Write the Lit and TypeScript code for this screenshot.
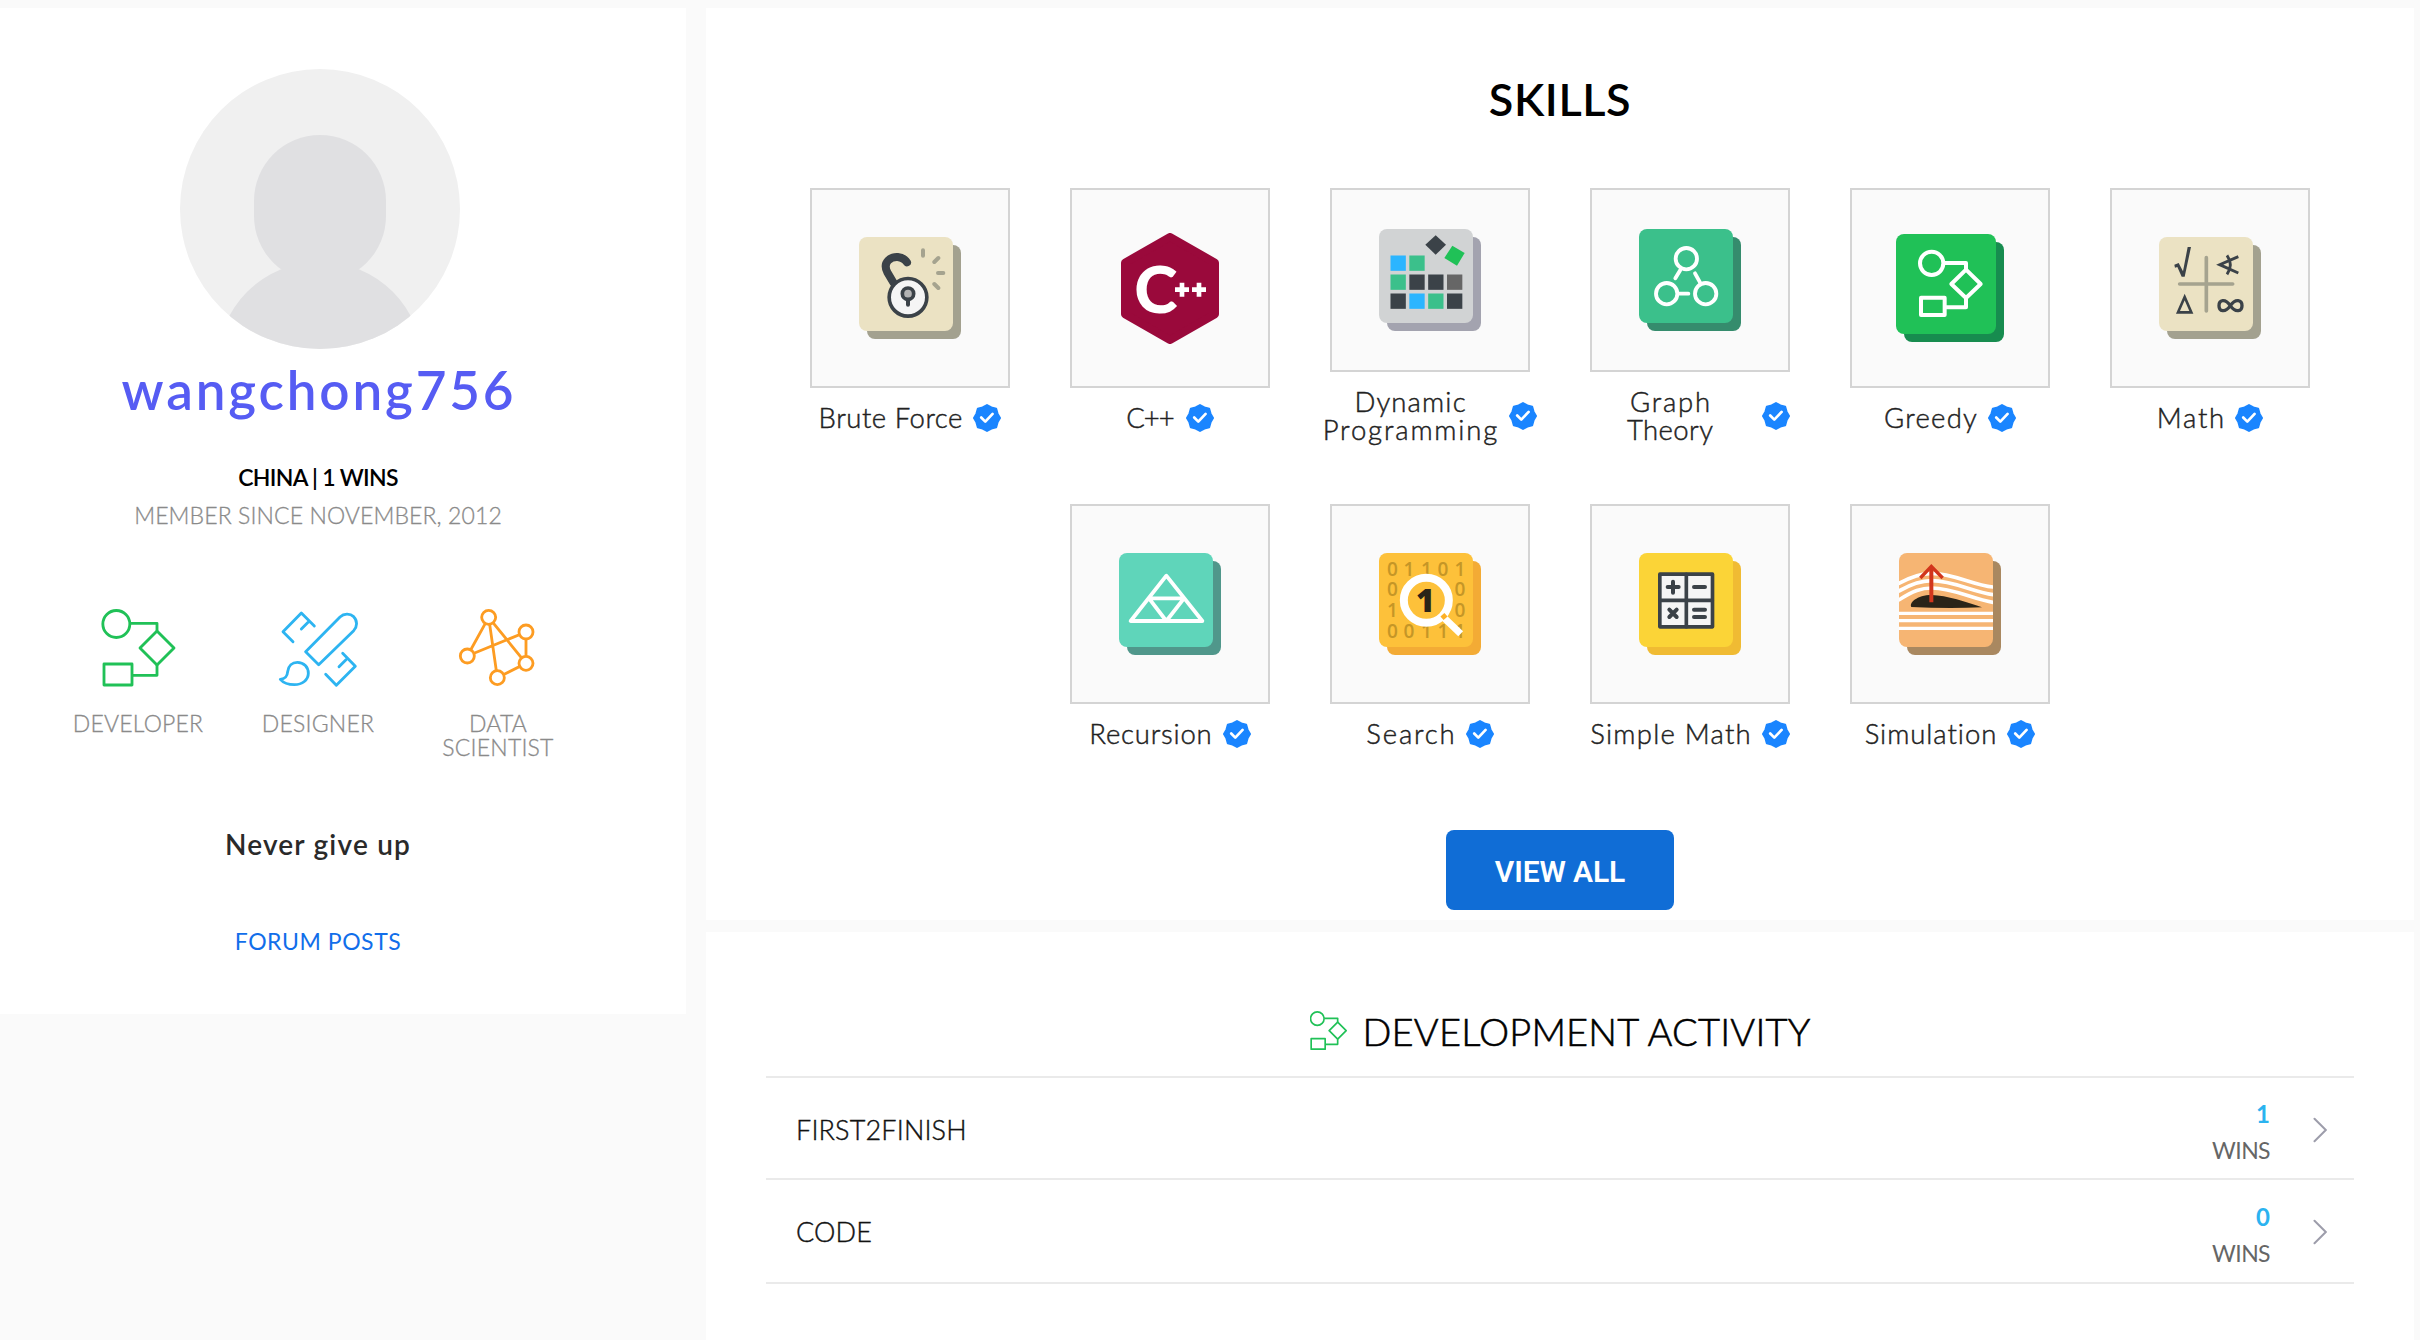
import { LitElement, html, svg, css, nothing, SVGTemplateResult } from "lit";
import { customElement } from "lit/decorators.js";
import { styleMap } from "lit/directives/style-map.js";

interface Line {
  text: string;
  tracking: number;
}

interface Skill {
  lines: Line[];
  box: string;
  width: number;
  height: number;
  art: SVGTemplateResult;
}

const tile = (x: number, y: number, front: string, back: string, size = 282) => svg`
  <rect x=${x + 24} y=${y + 24} width=${size} height=${size} rx="24" fill=${back} />
  <rect x=${x} y=${y} width=${size} height=${size} rx="24" fill=${front} />`;

const bruteForce = svg`
  ${tile(237, 231, "#ebe2c3", "#a3a18f")}
  <path d="M341 369 L322 337 C306 305 334 290 353 291 C368 293 376 299 381 307" fill="none" stroke="#3b4248" stroke-width="24" stroke-linecap="round" />
  <circle cx="384" cy="412" r="56.5" fill="#f5f5f5" stroke="#3b4248" stroke-width="11" />
  <path d="M384 420 V434" stroke="#3b4248" stroke-width="12" stroke-linecap="round" />
  <circle cx="384" cy="401" r="17" fill="#b3b3b3" stroke="#3b4248" stroke-width="11" />
  <path d="M429 271 V287 M463 306 L475 294 M474 339 H490 M463 372 L475 384" fill="none" stroke="#a5a38f" stroke-width="12" stroke-linecap="round" />`;

const cpp = svg`
  <polygon points="1170,230 1305,307 1305,462 1170,539 1035,462 1035,307" fill="#9a093b" stroke="#9a093b" stroke-width="24" stroke-linejoin="round" />
  <text x="1063" y="457" font-family="Lato, sans-serif" font-weight="900" font-size="194" fill="#fff" textLength="130" lengthAdjust="spacingAndGlyphs">C</text>
  <path d="M1185 388 H1227 M1206 367 V409 M1236 388 H1278 M1257 367 V409" stroke="#fff" stroke-width="14" />`;

const dark = "#3b4248";
const mint = "#3bc08b";
const sky = "#2bb5ff";
const cells: [number, number, string][] = [
  [0, 0, sky], [1, 0, mint],
  [0, 1, mint], [1, 1, dark], [2, 1, dark], [3, 1, "#666666"],
  [0, 2, dark], [1, 2, sky], [2, 2, mint], [3, 2, dark],
];

const dynamic = svg`
  ${tile(237, 207, "#d1d3d4", "#a3a3af")}
  ${cells.map(([c, r, fill]) => svg`<rect x=${271.5 + c * 56.5} y=${286.5 + r * 57} width="46" height="46" fill=${fill} />`)}
  <polygon points="407,226 438,254 407,284 376,254" fill=${dark} />
  <polygon points="457,257 494,279 471,317 433,294" fill="#20c157" />`;

const graph = svg`
  ${tile(1017, 207, mint, "#358c6d")}
  <g fill="none" stroke="#fff" stroke-width="11.5" stroke-linecap="round">
    <circle cx="1159" cy="296" r="32" />
    <circle cx="1100" cy="401" r="32" />
    <circle cx="1217" cy="401" r="32" />
    <path d="M1141 330 L1126 355 M1185 340 L1200 367 M1136 401 H1165" />
  </g>`;

const greedy = svg`
  ${tile(228, 222, "#20c157", "#178c4f", 300)}
  <g fill="none" stroke="#fff" stroke-width="12" stroke-linejoin="round">
    <circle cx="335" cy="310" r="35" />
    <path d="M374 309 H438 V330" />
    <path d="M438 329 L482 372 L438 414 L394 372 Z" />
    <path d="M438 414 V442 H378" />
    <rect x="303" y="413" width="71" height="52" />
  </g>`;

const math = svg`
  ${tile(1017, 231, "#ebe2c3", "#a3a18f")}
  <path d="M1159 293 V453 M1079 372 H1238" stroke="#a5a38f" stroke-width="11" stroke-linecap="round" />
  <path d="M1063 314 L1076 309 L1089 334 L1103 261 H1113 L1094 350 H1085 L1072 321 L1065 323 Z" fill=${dark} />
  <g fill="none" stroke=${dark}>
    <path d="M1255 290 L1199 314 L1255 339 M1221 286 Q1241 314 1221 343" stroke-width="8.5" />
    <path d="M1094 411 L1114 457 H1074 Z" stroke-width="8" />
    <path d="M1231 437 C1215 414 1197 420 1197 437 C1197 454 1215 460 1231 437 C1247 414 1266 420 1266 437 C1266 454 1247 460 1231 437 Z" stroke-width="10" />
  </g>`;

const recursion = svg`
  ${tile(237, 219, "#5fd5ba", "#50978b")}
  <path d="M379 287 L272 423 H487 Z M327 355 H432 L379 423 Z" fill="none" stroke="#fff" stroke-width="11.5" stroke-linejoin="round" />`;

const digitColumns = [1057, 1107, 1159, 1209, 1260];
const digitRows: [number, string][] = [[288, "01101"], [349, "0   0"], [411, "1   0"], [473, "00111"]];

const search = svg`
  ${tile(1017, 219, "#fdc13a", "#f3ab35")}
  <g font-family="'Open Sans', sans-serif" font-weight="600" font-size="57" text-anchor="middle" fill="#c59627">
    ${digitRows.map(([y, row]) => [...row].map((d, i) => (d === " " ? nothing : svg`<text x=${digitColumns[i]} y=${y}>${d}</text>`)))}
  </g>
  <path d="M1204 406 L1262 461" stroke="#fff" stroke-width="21" />
  <circle cx="1159" cy="361" r="67.5" fill="#fdc13a" stroke="#fff" stroke-width="24" />
  <path d="M1206 415 L1218 404" stroke="#fdb027" stroke-width="14" />
  <text x="1156" y="395" font-family="'Open Sans', sans-serif" font-weight="800" font-size="96" text-anchor="middle" fill="#2a2418">1</text>`;

const simpleMath = svg`
  ${tile(237, 219, "#fbd437", "#f0bb33")}
  <g stroke=${dark} stroke-width="11" stroke-linejoin="round" stroke-linecap="round">
    <rect x="299.500" y="282.500" width="158" height="158" fill="#f5f5f5" />
    <path d="M379 283 V440 M300 361 H457" />
    <path d="M323 321 H356 M339 305 V338 M402 321 H435 M402 389 H435 M402 411 H435 M328 389 L350 411 M350 389 L328 411" stroke-width="12" />
  </g>`;

const simulation = svg`
  <clipPath id="tile-clip"><rect x="1017" y="219" width="282" height="282" rx="24" /></clipPath>
  ${tile(1017, 219, "#f6b573", "#a98860")}
  <g clip-path="url(#tile-clip)">
    <g fill="none" stroke="#fff" stroke-width="11">
      <path d="M1015 311 C1050 292 1085 280 1115 280 C1180 280 1240 316 1300 321" />
      <path d="M1015 334 C1050 314 1085 302 1115 302 C1180 302 1240 336 1300 344" />
      <path d="M1015 361 C1060 332 1085 324 1115 324 C1180 324 1240 358 1300 367" />
      <path d="M1017 400 H1300 M1017 422 H1300 M1017 445 H1300" stroke-width="10" />
    </g>
    <path d="M1054 381 C1046 370 1070 345 1115 345 C1160 346 1220 366 1266 382 Q1160 386 1054 381 Z" fill="#2a2418" />
    <path d="M1114 367 V262" stroke="#d2361c" stroke-width="12" />
    <path d="M1081 294 L1114 259 L1148 294" fill="none" stroke="#d2361c" stroke-width="10" />
  </g>`;

const line = (text: string, tracking: number): Line => ({ text, tracking });
const square = (x: number, y: number) => `${x} ${y} 306 306`;

const SKILLS: Skill[] = [
  { lines: [line("Brute Force", 0.5)], box: square(237, 231), width: 102, height: 102, art: bruteForce },
  { lines: [line("C++", -1)], box: "1023 218 294 333", width: 98, height: 111, art: cpp },
  { lines: [line("Dynamic", 1.15), line("Programming", 1.85)], box: square(237, 207), width: 102, height: 102, art: dynamic },
  { lines: [line("Graph", 1.8), line("Theory", 0.4)], box: square(1017, 207), width: 102, height: 102, art: graph },
  { lines: [line("Greedy", 1.25)], box: "228 222 324 324", width: 108, height: 108, art: greedy },
  { lines: [line("Math", 1.7)], box: square(1017, 231), width: 102, height: 102, art: math },
  { lines: [line("Recursion", 0.8)], box: square(237, 219), width: 102, height: 102, art: recursion },
  { lines: [line("Search", 1.8)], box: square(1017, 219), width: 102, height: 102, art: search },
  { lines: [line("Simple Math", 1.25)], box: square(237, 219), width: 102, height: 102, art: simpleMath },
  { lines: [line("Simulation", 0.95)], box: square(1017, 219), width: 102, height: 102, art: simulation },
];

const badgePoints = Array.from({ length: 16 }, (_, i) => {
  const r = i % 2 ? 11.4 : 13;
  const a = (i * Math.PI) / 8;
  return `${(14 + r * Math.cos(a)).toFixed(2)},${(14 + r * Math.sin(a)).toFixed(2)}`;
}).join(" ");

const flowchart = (weight: number) => svg`
  <g fill="none" stroke="#20c157" stroke-width=${weight} stroke-linejoin="round">
    <circle cx="79" cy="72" r="40.5" />
    <path d="M122 70 H201 V92" />
    <path d="M201 93 L252 144 L201 195 L150 144 Z" />
    <path d="M201 195 V226 H127" />
    <rect x="42" y="192" width="84" height="63" />
  </g>`;

const designTools = svg`
  <g fill="none" stroke="#2db4f1" stroke-width="8.5" stroke-linejoin="round" stroke-linecap="round">
    <path d="M609 125 L579 95 L634 39 L673 78 M634 87 L655 66" />
    <path d="M686 194 L647 155 L750 51 C762 40 780 40 791 50 C803 62 802 80 791 92 Z" />
    <path d="M758 160 L796 199 L739 256 L707 223 M747 200 L768 179" />
    <path d="M571 238 C588 236 592 228 593 215 C595 197 607 187 622 187 C642 187 655 202 655 220 C655 240 637 254 613 254 C595 254 578 246 571 238 Z" />
  </g>`;

const dataGraph = svg`
  <g fill="#fff" stroke="#fd9c22" stroke-width="8.500">
    <path d="M1196 52 L1132 168 L1308 96 V190 L1222 233 L1196 52 L1308 190" fill="none" />
    <circle cx="1196" cy="52" r="21" />
    <circle cx="1308" cy="96" r="21" />
    <circle cx="1132" cy="168" r="21" />
    <circle cx="1308" cy="190" r="21" />
    <circle cx="1222" cy="233" r="21" />
  </g>`;

const TRACKS = [
  { name: ["DEVELOPER"], box: "24 24 240 240", art: flowchart(8.5) },
  { name: ["DESIGNER"], box: "564 24 240 240", art: designTools },
  { name: ["DATA", "SCIENTIST"], box: "1104 24 240 240", art: dataGraph },
];

const ACTIVITIES = [
  { name: "FIRST2FINISH", wins: 1 },
  { name: "CODE", wins: 0 },
];

@customElement("profile-card")
class ProfileCard extends LitElement {
  static styles = css`
    :host {
      box-sizing: border-box;
      display: flex;
      flex-direction: column;
      align-items: center;
      width: 686px;
      height: 1006px;
      padding: 61px 50px 0 0;
      background: #fff;
      text-align: center;
    }
    .avatar { display: block; width: 280px; height: 280px; margin-left: 4px; }
    .handle { margin: 11px 0 0 2px; font-size: 53px; line-height: 60px; font-weight: 600; letter-spacing: 2.85px; color: #565cf3; }
    .origin { margin-top: 42px; font-size: 23px; line-height: 30px; font-weight: 600; letter-spacing: -0.7px; color: #000; }
    .since { margin-top: 8px; font-size: 23px; line-height: 30px; font-weight: 300; letter-spacing: 0.1px; color: #8a8a8a; -webkit-text-stroke: 0.3px; }
    .tracks { display: flex; margin-top: 78px; height: 151px; }
    .track { display: flex; flex-direction: column; align-items: center; gap: 23px; width: 180px; }
    .track svg { display: block; width: 80px; height: 80px; }
    .track span { display: block; font-size: 23px; line-height: 24px; font-weight: 300; letter-spacing: 0.2px; color: #8a8a8a; -webkit-text-stroke: 0.3px; }
    .quote { margin-top: 68px; font-size: 28px; line-height: 34px; font-weight: 600; letter-spacing: 1.2px; color: #2a2a2a; }
    .forum { margin-top: 65px; font-size: 23px; line-height: 30px; letter-spacing: 0.55px; color: #116eea; text-decoration: none; }
  `;

  render() {
    return html`
      <svg class="avatar" viewBox="180 69 280 280">
        <clipPath id="face"><circle cx="320" cy="209" r="140" /></clipPath>
        <circle cx="320" cy="209" r="140" fill="#f0f0f0" />
        <g clip-path="url(#face)" fill="#e0e0e2">
          <rect x="254" y="135" width="132" height="147" rx="66" />
          <circle cx="320" cy="364.7" r="103" />
        </g>
      </svg>
      <div class="handle">wangchong756</div>
      <div class="origin">CHINA | 1 WINS</div>
      <div class="since">MEMBER SINCE NOVEMBER, 2012</div>
      <div class="tracks">
        ${TRACKS.map((t) => html`
          <div class="track">
            <svg viewBox=${t.box}>${t.art}</svg>
            <div>${t.name.map((n) => html`<span>${n}</span>`)}</div>
          </div>`)}
      </div>
      <div class="quote">Never give up</div>
      <a class="forum">FORUM POSTS</a>
    `;
  }
}

@customElement("skills-card")
class SkillsCard extends LitElement {
  static styles = css`
    :host {
      box-sizing: border-box;
      display: flex;
      flex-direction: column;
      align-items: center;
      height: 912px;
      padding-top: 64px;
      background: #fff;
    }
    .title { font-size: 45px; line-height: 54px; font-weight: 600; letter-spacing: 0.6px; color: #000; }
    .grid { display: flex; flex-wrap: wrap; justify-content: center; gap: 60px; width: 1500px; margin-top: 62px; }
    .skill { display: flex; flex-direction: column; gap: 16px; width: 200px; height: 256px; }
    .box {
      box-sizing: border-box;
      flex: 0 1 200px;
      min-height: 0;
      display: flex;
      align-items: center;
      justify-content: center;
      border: 2px solid #d4d4d4;
      background: #fafafa;
    }
    .box svg { flex: none; display: block; }
    .label { flex: none; display: flex; align-items: center; justify-content: center; gap: 11px; }
    .label.wrapped { gap: 12px; }
    .name { flex: none; min-width: 0; text-align: center; font-size: 27.5px; line-height: 28px; font-weight: 300; color: #222; -webkit-text-stroke: 0.45px; }
    .wrapped .name { min-width: 160px; }
    .name span { display: block; white-space: nowrap; }
    .badge { flex: none; display: block; width: 28px; height: 28px; }
    .all {
      width: 228px;
      height: 80px;
      margin-top: 70px;
      padding: 2px 0 0;
      border: 0;
      border-radius: 8px;
      background: #106dd6;
      color: #fff;
      font: 600 30px Roboto, sans-serif;
      letter-spacing: -0.1px;
    }
  `;

  render() {
    return html`
      <div class="title">SKILLS</div>
      <div class="grid">
        ${SKILLS.map((s) => html`
          <div class="skill">
            <div class="box"><svg width=${s.width} height=${s.height} viewBox=${s.box}>${s.art}</svg></div>
            <div class="label ${s.lines.length > 1 ? "wrapped" : ""}">
              <div class="name">
                ${s.lines.map((l) => html`<span style=${styleMap({ letterSpacing: `${l.tracking}px`, marginRight: `${-l.tracking}px` })}>${l.text}</span>`)}
              </div>
              <svg class="badge" viewBox="0 0 28 28">
                <polygon points=${badgePoints} fill="#1a85ff" stroke="#1a85ff" stroke-width="2" stroke-linejoin="round" />
                <path d="M8.2 13.5 L12.3 17.6 L19.6 9.9" fill="none" stroke="#fff" stroke-width="2.7" stroke-linecap="round" stroke-linejoin="round" />
              </svg>
            </div>
          </div>`)}
      </div>
      <button class="all">VIEW ALL</button>
    `;
  }
}

@customElement("activity-card")
class ActivityCard extends LitElement {
  static styles = css`
    :host { box-sizing: border-box; display: block; height: 408px; padding: 76px 60px 0; background: #fff; }
    .head { display: flex; align-items: center; justify-content: center; gap: 16px; height: 46px; }
    .head svg { display: block; width: 37px; height: 39px; margin-top: -2px; }
    .title { font-size: 38px; line-height: 46px; font-weight: 300; letter-spacing: 0.2px; color: #000; -webkit-text-stroke: 0.6px; }
    .list { margin-top: 22px; border-top: 2px solid #eaeaea; }
    .row {
      box-sizing: border-box;
      display: flex;
      align-items: center;
      height: 102px;
      padding: 4px 27px 0 30px;
      border-bottom: 2px solid #eaeaea;
    }
    .row + .row { height: 104px; padding-top: 2px; }
    .name { flex: 1; font-size: 27px; line-height: 32px; font-weight: 300; letter-spacing: 0.15px; color: #111; -webkit-text-stroke: 0.4px; }
    .result { margin: 3px 43px 0 0; text-align: right; line-height: 36px; }
    .row + .row .result { margin-top: 5px; }
    .count { font-size: 24px; font-weight: 700; color: #2bb3f0; }
    .unit { font-size: 23px; letter-spacing: -0.6px; color: #666; }
    .chevron { display: block; width: 14px; height: 26px; }
  `;

  render() {
    return html`
      <div class="head">
        <svg viewBox="35 27 222 232">${flowchart(10)}</svg>
        <div class="title">DEVELOPMENT ACTIVITY</div>
      </div>
      <div class="list">
        ${ACTIVITIES.map((a) => html`
          <div class="row">
            <div class="name">${a.name}</div>
            <div class="result">
              <div class="count">${a.wins}</div>
              <div class="unit">WINS</div>
            </div>
            <svg class="chevron" viewBox="0 0 14 26">
              <path d="M1.5 1.8 L12.8 13 L1.5 24.2" fill="none" stroke="#9d9dab" stroke-width="2" stroke-linecap="round" />
            </svg>
          </div>`)}
      </div>
    `;
  }
}

@customElement("app-root")
class AppRoot extends LitElement {
  static styles = css`
    :host {
      box-sizing: border-box;
      display: flex;
      align-items: flex-start;
      gap: 20px;
      width: 2420px;
      height: 1340px;
      padding: 8px 6px 0 0;
      overflow: hidden;
      background: #fafafa;
      font-family: Lato, "Open Sans", sans-serif;
    }
    .main { flex: 1; display: flex; flex-direction: column; gap: 12px; }
  `;

  render() {
    return html`
      <profile-card></profile-card>
      <div class="main">
        <skills-card></skills-card>
        <activity-card></activity-card>
      </div>
    `;
  }
}
